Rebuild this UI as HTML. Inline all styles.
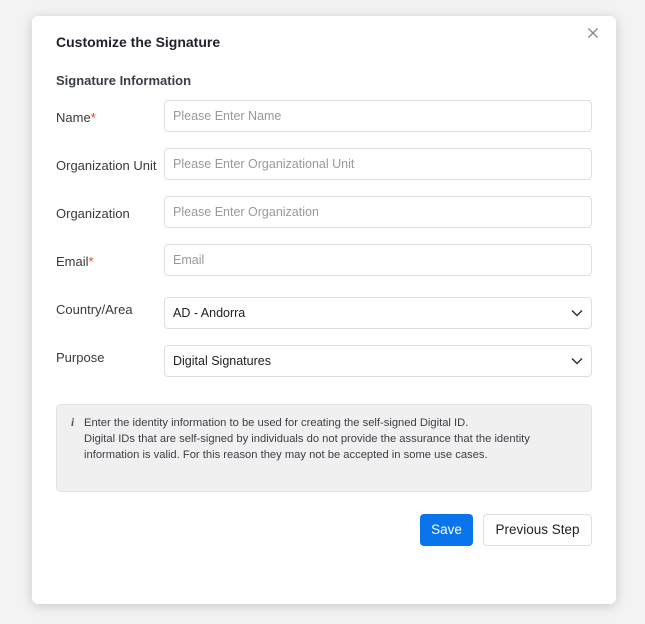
<!DOCTYPE html>
<html><head><meta charset="utf-8"><style>
*{box-sizing:border-box;margin:0;padding:0}
body{width:645px;height:624px;background:#f3f3f3;font-family:"Liberation Sans",sans-serif;position:relative;overflow:hidden}
.dlg{position:absolute;left:32px;top:16px;width:584px;height:588px;background:#fff;border-radius:6px;box-shadow:0 2px 12px rgba(0,0,0,.18)}
.t{position:absolute;left:24px;top:18px;font-size:14px;font-weight:bold;color:#1f2329}
.st{position:absolute;left:24px;top:57px;font-size:13px;font-weight:bold;color:#3a3f47}
.x{position:absolute;left:554px;top:10px}
.lbl{position:absolute;left:24px;font-size:13px;color:#3a3a3a}
.lbl b{color:#e53935;font-weight:normal}
.in{position:absolute;left:132px;width:428px;height:32px;border:1px solid #dcdfe6;border-radius:4px;font-size:12.5px;color:#999;padding:0 8px;line-height:31px}
.sel{color:#222}
.sel svg{position:absolute;right:8px;top:11px}
.info{position:absolute;left:24px;top:388px;width:536px;height:88px;background:#f0f0f0;border:1px solid #e2e2e2;border-radius:5px;font-size:11.2px;color:#3a3f47;line-height:16px;padding:10px 10px 0 27px}
.info i{position:absolute;left:14px;top:10px;font-family:"Liberation Serif",serif;font-weight:bold;color:#555}
.btn{position:absolute;top:498px;height:32px;border-radius:4px;font-size:13.5px;line-height:32px;text-align:center}
</style></head><body>
<div class="dlg">
<div class="t">Customize the Signature</div>
<svg class="x" width="14" height="14" viewBox="0 0 14 14"><path d="M2.5 2.5L11.5 11.5M11.5 2.5L2.5 11.5" stroke="#888" stroke-width="1.3"/></svg>
<div class="st">Signature Information</div>
<div class="lbl" style="top:94px">Name<b>*</b></div><div class="in" style="top:84px">Please Enter Name</div>
<div class="lbl" style="top:142px">Organization Unit</div><div class="in" style="top:132px">Please Enter Organizational Unit</div>
<div class="lbl" style="top:190px">Organization</div><div class="in" style="top:180px">Please Enter Organization</div>
<div class="lbl" style="top:238px">Email<b>*</b></div><div class="in" style="top:228px">Email</div>
<div class="lbl" style="top:286px">Country/Area</div><div class="in sel" style="top:281px">AD - Andorra<svg width="12" height="8" viewBox="0 0 12 8"><path d="M1 1.5L6 6.5L11 1.5" stroke="#333" stroke-width="1.5" fill="none"/></svg></div>
<div class="lbl" style="top:334px">Purpose</div><div class="in sel" style="top:329px">Digital Signatures<svg width="12" height="8" viewBox="0 0 12 8"><path d="M1 1.5L6 6.5L11 1.5" stroke="#333" stroke-width="1.5" fill="none"/></svg></div>
<div class="info"><i>i</i>Enter the identity information to be used for creating the self-signed Digital ID.<br>Digital IDs that are self-signed by individuals do not provide the assurance that the identity<br>information is valid. For this reason they may not be accepted in some use cases.</div>
<div class="btn" style="left:388px;width:53px;background:#0a74ec;color:#fff">Save</div>
<div class="btn" style="left:451px;width:109px;border:1px solid #dcdfe6;color:#222;line-height:30px">Previous Step</div>
</div>
</body></html>
